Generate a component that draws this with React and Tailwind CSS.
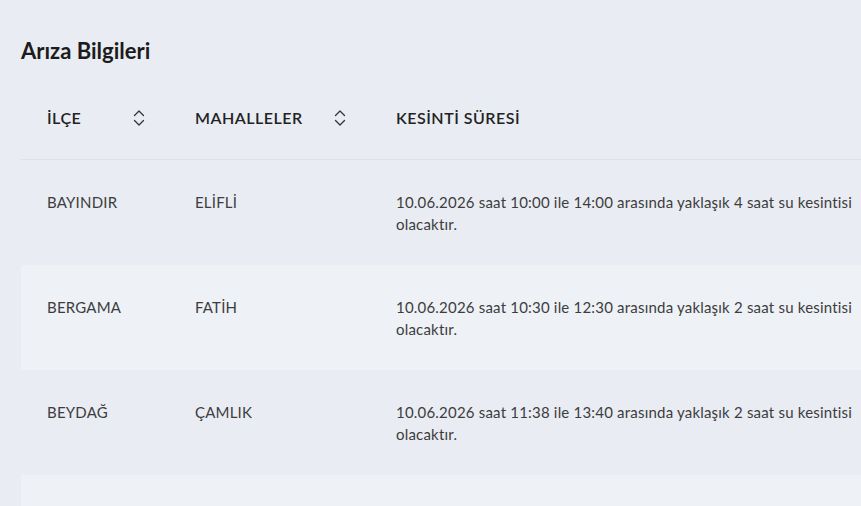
import React from "react";

const rows = [
  { ilce: "BAYINDIR", mah: "ELİFLİ", text: "10.06.2026 saat 10:00 ile 14:00 arasında yaklaşık 4 saat su kesintisi olacaktır.", striped: false },
  { ilce: "BERGAMA", mah: "FATİH", text: "10.06.2026 saat 10:30 ile 12:30 arasında yaklaşık 2 saat su kesintisi olacaktır.", striped: true },
  { ilce: "BEYDAĞ", mah: "ÇAMLIK", text: "10.06.2026 saat 11:38 ile 13:40 arasında yaklaşık 2 saat su kesintisi olacaktır.", striped: false },
  { ilce: "", mah: "", text: "\u00a0", striped: true },
];

function SortIcon() {
  return (
    <svg width="12" height="18" viewBox="0 0 12 18" fill="none" stroke="#333" strokeWidth="1.3" strokeLinecap="round" strokeLinejoin="round">
      <path d="M1.5 6.5 L6 2 L10.5 6.5" />
      <path d="M1.5 11.5 L6 16 L10.5 11.5" />
    </svg>
  );
}

export default function App() {
  return (
    <div className="h-[506px] w-[861px] overflow-hidden bg-[#e9ecf3] pl-[21px] pt-[37px] text-[#2b2b2b]" style={{ fontFamily: "Lato, 'Noto Sans', sans-serif" }}>
      <h2 className="text-[22px] font-bold leading-[28px] text-[#1c1c1c]">Arıza Bilgileri</h2>
      <div className="mt-[13px] w-[900px]">
        <div className="flex h-[82px] items-center border-b border-[#dde1e8] pb-[2px]">
          <div className="flex w-[148px] items-center justify-between pl-[26px] pr-[24px] text-[16px] font-semibold tracking-[0.5px] text-[#222]">
            <span>İLÇE</span>
            <SortIcon />
          </div>
          <div className="flex w-[201px] items-center justify-between pl-[26px] pr-[24px] text-[16px] font-semibold tracking-[0.5px] text-[#222]">
            <span>MAHALLELER</span>
            <SortIcon />
          </div>
          <div className="pl-[26px] text-[16px] font-semibold tracking-[0.5px] text-[#222]">KESİNTİ SÜRESİ</div>
        </div>
        {rows.map((r, i) => (
          <div key={i} className={`flex h-[105px] items-start pt-[31px] text-[15px] leading-[22px] tracking-[0.2px] text-[#3d3d3d] ${r.striped ? "bg-[#eef1f6]" : ""}`}>
            <div className="w-[148px] pl-[26px]">{r.ilce}</div>
            <div className="w-[201px] pl-[26px]">{r.mah}</div>
            <div className="w-[490px] pl-[26px]">{r.text}</div>
          </div>
        ))}
      </div>
    </div>
  );
}
